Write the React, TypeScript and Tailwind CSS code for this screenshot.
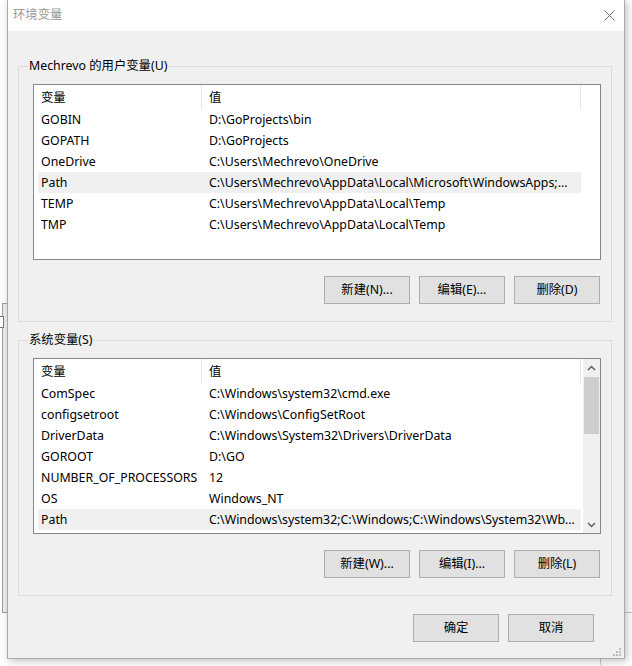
import React from 'react';

const userVars: [string, string][] = [
  ['GOBIN', 'D:\\GoProjects\\bin'],
  ['GOPATH', 'D:\\GoProjects'],
  ['OneDrive', 'C:\\Users\\Mechrevo\\OneDrive'],
  ['Path', 'C:\\Users\\Mechrevo\\AppData\\Local\\Microsoft\\WindowsApps;...'],
  ['TEMP', 'C:\\Users\\Mechrevo\\AppData\\Local\\Temp'],
  ['TMP', 'C:\\Users\\Mechrevo\\AppData\\Local\\Temp'],
];

const sysVars: [string, string][] = [
  ['ComSpec', 'C:\\Windows\\system32\\cmd.exe'],
  ['configsetroot', 'C:\\Windows\\ConfigSetRoot'],
  ['DriverData', 'C:\\Windows\\System32\\Drivers\\DriverData'],
  ['GOROOT', 'D:\\GO'],
  ['NUMBER_OF_PROCESSORS', '12'],
  ['OS', 'Windows_NT'],
  ['Path', 'C:\\Windows\\system32;C:\\Windows;C:\\Windows\\System32\\Wb...'],
];

function WinButton({ label }: { label: string }) {
  return (
    <button className="w-[86px] h-[28px] pt-[1px] bg-[#e1e1e1] border border-[#adadad] flex items-center justify-center leading-none">
      {label}
    </button>
  );
}

function Chevron({ up }: { up?: boolean }) {
  return (
    <svg width="9" height="6" viewBox="0 0 9 6">
      <path
        d={up ? 'M1 5 L4.5 1.5 L8 5' : 'M1 1 L4.5 4.5 L8 1'}
        fill="none"
        stroke="#606060"
        strokeWidth="1.5"
      />
    </svg>
  );
}

function ListView({ rows, selected, scroll }: { rows: [string, string][]; selected: number; scroll?: boolean }) {
  return (
    <div className="w-[568px] h-[176px] border border-[#828790] bg-white flex overflow-hidden">
      <div className="flex-1 min-w-0">
        <div className="h-[24px] flex">
          <div className="w-[168px] h-full pl-[7px] pt-[2px] flex items-center border-r border-[#e5e5e5]">变量</div>
          <div className="w-[379px] h-full pl-[7px] pt-[2px] flex items-center border-r border-[#e5e5e5]">值</div>
        </div>
        {rows.map(([name, value], i) => (
          <div
            key={name}
            className={`ml-[4px] w-[543px] h-[21px] pt-[2px] flex items-center whitespace-nowrap ${i === selected ? 'bg-[#f0f0f0]' : ''}`}
          >
            <div className="w-[164px] pl-[3px] overflow-hidden">{name}</div>
            <div className="flex-1 pl-[7px] overflow-hidden">{value}</div>
          </div>
        ))}
      </div>
      {scroll && (
        <div className="w-[17px] h-full bg-[#f0f0f0] flex flex-col items-center">
          <div className="h-[17px] w-full flex items-center justify-center">
            <Chevron up />
          </div>
          <div className="mt-[1px] w-[15px] h-[57px] bg-[#cdcdcd]" />
          <div className="flex-1" />
          <div className="h-[17px] w-full flex items-center justify-center">
            <Chevron />
          </div>
        </div>
      )}
    </div>
  );
}

function GroupBox({ title, children }: { title: string; children: React.ReactNode }) {
  return (
    <div className="relative w-[594px] h-[256px] border border-[#dcdcdc] pl-[14px] pr-[10px] pt-[17px]">
      <span className="absolute left-[9px] top-[-10px] px-[1px] bg-[#f0f0f0] leading-[18px]">{title}</span>
      {children}
    </div>
  );
}

export default function App() {
  return (
    <div className="relative w-[632px] h-[666px] overflow-hidden bg-white text-[12.35px] text-black font-['Noto_Sans','Noto_Sans_CJK_SC',sans-serif]">
      {/* window behind the dialog */}
      <div className="absolute left-[2px] top-[303px] w-[40px] h-[310px] border border-[#a0a0a0] bg-[#f0f0f0]" />
      <div className="absolute left-[-6px] top-[316px] w-[10px] h-[12px] border border-[#7a7a7a] bg-white" />
      <div className="absolute left-[600px] top-[612px] w-[60px] h-[60px] border border-[#c8c8c8] rounded-[10px] bg-white" />

      <div className="absolute left-[7px] top-0 w-[618px] h-[659px] border border-t-0 border-[#aaaaaa] bg-[#f0f0f0] shadow-[2px_2px_8px_rgba(0,0,0,0.25)]">
        <div className="h-[31px] bg-white flex items-center justify-between pl-[5px] pr-[9px]">
          <span className="text-[#9a9a9a]">环境变量</span>
          <svg width="11" height="11" viewBox="0 0 11 11">
            <path d="M0.5 0.5 L10.5 10.5 M10.5 0.5 L0.5 10.5" stroke="#707070" strokeWidth="1" />
          </svg>
        </div>

        <div className="pl-[10px] pr-[12px] pt-[35px] flex flex-col">
          <GroupBox title="Mechrevo 的用户变量(U)">
            <ListView rows={userVars} selected={3} />
            <div className="mt-[16px] flex justify-end gap-[9px] pr-[1px]">
              <WinButton label="新建(N)..." />
              <WinButton label="编辑(E)..." />
              <WinButton label="删除(D)" />
            </div>
          </GroupBox>

          <div className="mt-[18px]">
            <GroupBox title="系统变量(S)">
              <ListView rows={sysVars} selected={6} scroll />
              <div className="mt-[16px] flex justify-end gap-[9px] pr-[1px]">
                <WinButton label="新建(W)..." />
                <WinButton label="编辑(I)..." />
                <WinButton label="删除(L)" />
              </div>
            </GroupBox>
          </div>

          <div className="mt-[18px] flex justify-end gap-[9px] pr-[18px]">
            <WinButton label="确定" />
            <WinButton label="取消" />
          </div>
        </div>

        <svg className="absolute right-[3px] bottom-[2px]" width="8" height="8" viewBox="0 0 8 8">
          <rect x="6" y="0" width="2" height="2" fill="#bcbcbc" />
          <rect x="3" y="3" width="2" height="2" fill="#bcbcbc" />
          <rect x="6" y="3" width="2" height="2" fill="#bcbcbc" />
          <rect x="0" y="6" width="2" height="2" fill="#bcbcbc" />
          <rect x="3" y="6" width="2" height="2" fill="#bcbcbc" />
          <rect x="6" y="6" width="2" height="2" fill="#bcbcbc" />
        </svg>
      </div>
    </div>
  );
}
